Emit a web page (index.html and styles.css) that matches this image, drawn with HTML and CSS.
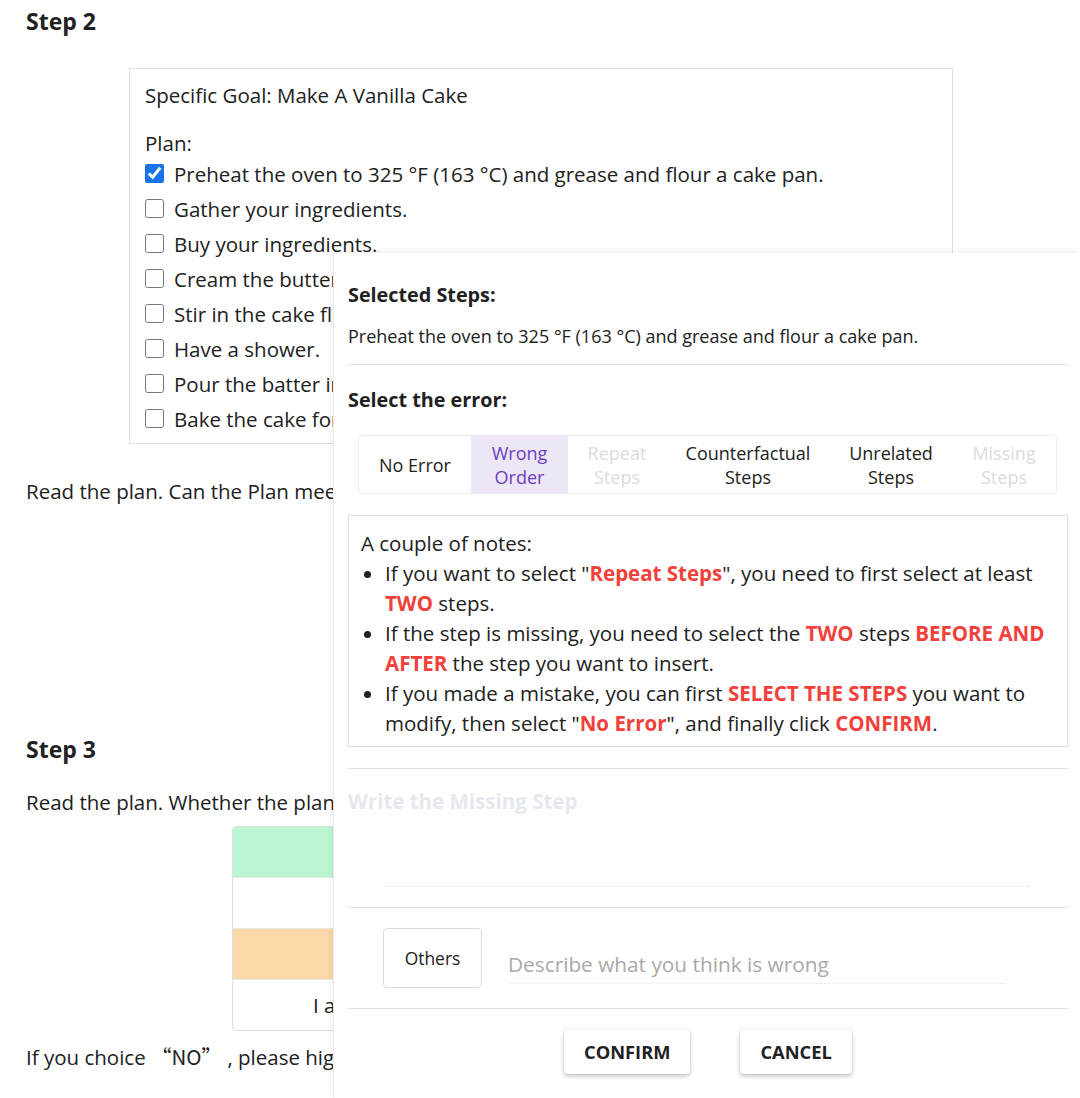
FILE: index.html
```html
<!DOCTYPE html>
<html lang="en">
<head>
<meta charset="utf-8">
<title>Plan check</title>
<link rel="stylesheet" href="styles.css">
</head>
<body>
<main class="page">
  <h2 class="step-title">Step 2</h2>
  <section class="plan-box">
    <div class="goal">Specific Goal: Make A Vanilla Cake</div>
    <div class="plan-label">Plan:</div>
    <ul class="plan-list">
      <li><label><input type="checkbox" checked><span>Preheat the oven to 325 °F (163 °C) and grease and flour a cake pan.</span></label></li>
      <li><label><input type="checkbox"><span>Gather your ingredients.</span></label></li>
      <li><label><input type="checkbox"><span>Buy your ingredients.</span></label></li>
      <li><label><input type="checkbox"><span>Cream the butter and sugar together in a large bowl.</span></label></li>
      <li><label><input type="checkbox"><span>Stir in the cake flour, baking powder and salt.</span></label></li>
      <li><label><input type="checkbox"><span>Have a shower.</span></label></li>
      <li><label><input type="checkbox"><span>Pour the batter into the prepared pan.</span></label></li>
      <li><label><input type="checkbox"><span>Bake the cake for 30 minutes.</span></label></li>
    </ul>
  </section>
  <p class="question q-step2">Read the plan. Can the Plan meet the Specific Goal? Select the wrong steps.</p>

  <h2 class="step-title step3">Step 3</h2>
  <p class="question q-step3">Read the plan. Whether the plan can be executed successfully?</p>
  <div class="choice-table">
    <div class="row green">YES</div>
    <div class="row">The plan can achieve the goal.</div>
    <div class="row orange">NO</div>
    <div class="row last">I am not sure whether the plan can achieve the goal.</div>
  </div>
  <p class="question q-last">If you choice <span class="cjk">“NO”</span> , please highlight the wrong steps in the plan.</p>
</main>

<aside class="drawer">
  <h3 class="d-title">Selected Steps:</h3>
  <p class="selected">Preheat the oven to 325 °F (163 °C) and grease and flour a cake pan.</p>
  <hr class="divider">
  <h3 class="d-title err-title">Select the error:</h3>
  <div class="seg">
    <button class="seg-btn w-no">No Error</button>
    <button class="seg-btn w-wrong active">Wrong<br>Order</button>
    <button class="seg-btn w-repeat disabled">Repeat<br>Steps</button>
    <button class="seg-btn w-counter">Counterfactual<br>Steps</button>
    <button class="seg-btn w-unrel">Unrelated<br>Steps</button>
    <button class="seg-btn w-miss disabled">Missing<br>Steps</button>
  </div>
  <div class="notes">
    <div>A couple of notes:</div>
    <ul>
      <li>If you want to select "<b>Repeat Steps</b>", you need to first select at least <b>TWO</b> steps.</li>
      <li>If the step is missing, you need to select the <b>TWO</b> steps <b>BEFORE AND AFTER</b> the step you want to insert.</li>
      <li>If you made a mistake, you can first <b>SELECT THE STEPS</b> you want to modify, then select "<b>No Error</b>", and finally click <b>CONFIRM</b>.</li>
    </ul>
  </div>
  <hr class="divider d2">
  <h3 class="missing-title">Write the Missing Step</h3>
  <div class="missing-field"></div>
  <hr class="divider d3">
  <div class="others-row">
    <button class="others-btn">Others</button>
    <div class="describe">Describe what you think is wrong</div>
  </div>
  <hr class="divider d4">
  <div class="actions">
    <button class="act">CONFIRM</button>
    <button class="act">CANCEL</button>
  </div>
</aside>
</body>
</html>
```

FILE: styles.css
```css
* { box-sizing: border-box; }
html, body { margin: 0; padding: 0; background: #fff; }
body {
  font-family: "Open Sans", "Noto Sans", sans-serif;
  color: #212121;
  overflow: hidden;
  height: 1098px;
}
.page { padding: 0 0 0 26px; }
.step-title {
  margin: 0;
  padding-top: 6px;
  font-size: 23px;
  line-height: 30px;
  font-weight: 700;
}
.plan-box {
  margin: 32px 0 0 103px;
  width: 824px;
  height: 376px;
  border: 1px solid #e0e0e0;
  padding: 11px 15px 0;
  font-size: 20.5px;
}
.goal { line-height: 30px; }
.plan-label { margin-top: 20px; line-height: 26px; }
.plan-list { list-style: none; margin: 0; padding: 0; }
.plan-list li { height: 35px; display: flex; align-items: center; }
.plan-list label { display: flex; align-items: center; gap: 10px; white-space: nowrap; }
.plan-list input {
  margin: 0;
  width: 19px; height: 19px;
  accent-color: #1a73e8;
}
.question { margin: 0; font-size: 20.5px; line-height: 30px; white-space: nowrap; }
.cjk { font-family: "Noto Sans CJK SC", "Open Sans", sans-serif; }
.q-step2 { margin-top: 32px; }
.step3 { margin-top: 228px; padding-top: 0; }
.q-step3 { margin-top: 23px; }
.choice-table {
  margin: 9px 0 0 206px;
  width: 616px;
  border: 1px solid #e0e0e0;
  border-radius: 4px;
  overflow: hidden;
  font-size: 20.5px;
}
.choice-table .row {
  height: 51px;
  display: flex; align-items: center; justify-content: center;
  border-top: 1px solid #e8e8e8;
}
.choice-table .row:first-child { border-top: 0; height: 50px; }
.choice-table .row.last { justify-content: flex-start; padding-left: 80px; }
.choice-table .green { background: #bbf5d2; }
.choice-table .orange { background: #fdd8a9; }
.q-last { margin-top: 10px; }

.drawer {
  position: absolute;
  left: 333px; top: 253px; right: 0; bottom: 0;
  background: #fff;
  border-left: 1px solid #ececec;
  box-shadow: -2px -2px 6px rgba(0,0,0,0.06);
  padding: 30px 12px 0 14px;
}
.d-title { margin: 0; font-size: 19.8px; line-height: 24px; font-weight: 700; }
.selected { margin: 17px 0 0; font-size: 18px; line-height: 24px; white-space: nowrap; }
.divider { border: 0; border-top: 1px solid #e0e0e0; margin: 16px 0 0; height: 0; }
.err-title { margin-top: 23px; }
.seg {
  margin: 23px 11px 0 10px;
  height: 59px;
  display: flex;
  border: 1px solid #ececec;
  border-radius: 4px;
  overflow: hidden;
}
.seg-btn {
  font-family: inherit;
  font-size: 18px;
  line-height: 24px;
  color: #212121;
  background: #fff;
  border: 0;
  padding: 0;
  text-align: center;
}
.seg-btn.active { background: #ece6f7; color: #6c3fc0; }
.seg-btn.disabled { color: #dcdcdc; }
.w-no { width: 112px; }
.w-wrong { width: 97px; }
.w-repeat { width: 98px; }
.w-counter { width: 164px; }
.w-unrel { width: 122px; }
.w-miss { flex: 1; }
.notes {
  margin-top: 21px;
  border: 1px solid #e0e0e0;
  padding: 12px 12px 8px 12px;
  font-size: 20.5px;
  line-height: 30px;
  height: 232px;
}
.notes ul { margin: 0; padding-left: 24px; }
.notes b { color: #f2403b; font-weight: 700; }
.d2 { margin-top: 21px; }
.missing-title { margin: 18px 0 0; font-size: 20.5px; line-height: 28px; font-weight: 700; color: #e6e8ee; }
.missing-field {
  margin: 0 38px 0 37px;
  height: 72px;
  border-bottom: 1px dotted #e2e2e2;
}
.d3 { margin-top: 20px; }
.others-row { margin-top: 20px; display: flex; align-items: flex-start; padding-left: 35px; }
.others-btn {
  width: 99px; height: 60px;
  font-family: inherit; font-size: 17.4px; color: #212121;
  background: #fff;
  border: 1px solid #dcdcdc;
  border-radius: 4px;
}
.describe {
  margin-left: 26px;
  margin-top: 18px;
  width: 497px;
  font-size: 20.8px;
  line-height: 36px;
  color: #a9a9a9;
  border-bottom: 1px dotted #e2e2e2;
  height: 38px;
}
.d4 { margin-top: 20px; }
.actions { margin-top: 20px; display: flex; gap: 50px; padding-left: 216px; }
.act {
  height: 45px;
  padding: 0 20px;
  font-family: inherit;
  font-size: 18.3px;
  font-weight: 700;
  color: #212121;
  background: #fff;
  border: 0;
  border-radius: 4px;
  box-shadow: 0 2px 4px rgba(0,0,0,0.25), 0 0 1px rgba(0,0,0,0.15);
}
```
